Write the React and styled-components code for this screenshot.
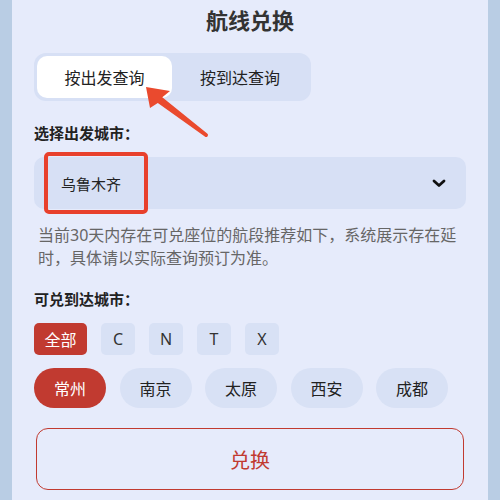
import React, { useState } from 'react';
import styled, { createGlobalStyle } from 'styled-components';

const GlobalStyle = createGlobalStyle`
  html, body {
    margin: 0;
    padding: 0;
    background: #b9cde4;
    font-family: "Noto Sans", "Noto Sans CJK SC", sans-serif;
  }
`;

const Panel = styled.div`
  position: relative;
  box-sizing: border-box;
  width: 476px;
  height: 500px;
  margin: 0 12px;
  padding: 0 22px;
  background: #e6ebfb;
  overflow: hidden;
`;

const Title = styled.h1`
  margin: 0;
  height: 40px;
  line-height: 40px;
  text-align: center;
  font-size: 22px;
  font-weight: 700;
  color: #333;
`;

const Tabs = styled.div`
  display: flex;
  box-sizing: border-box;
  width: 277px;
  height: 48px;
  margin-top: 13px;
  padding: 3px;
  background: #d7e0f5;
  border-radius: 12px;
`;

const Tab = styled.div`
  flex: ${(p) => (p.$active ? '0 0 135px' : '1')};
  display: flex;
  align-items: center;
  justify-content: center;
  border-radius: 10px;
  background: ${(p) => (p.$active ? '#fff' : 'transparent')};
  font-size: 16px;
  color: #222;
`;

const Label = styled.div`
  margin-top: ${(p) => p.$mt || 0}px;
  line-height: 22px;
  font-size: 15px;
  font-weight: 700;
  color: #222;
`;

const Select = styled.div`
  position: relative;
  display: flex;
  align-items: center;
  justify-content: space-between;
  height: 52px;
  margin-top: 13px;
  padding: 0 20px 0 27px;
  background: #d7e0f5;
  border-radius: 10px;
  font-size: 15px;
  color: #222;
`;

const Highlight = styled.div`
  position: absolute;
  left: 10px;
  top: -5px;
  box-sizing: border-box;
  width: 104px;
  height: 62px;
  border: 4px solid #e8402c;
  border-radius: 5px;
`;

const Note = styled.p`
  margin: 15px 0 0;
  padding: 0 4px;
  line-height: 22.5px;
  font-size: 16px;
  color: #666;
`;

const Row = styled.div`
  display: flex;
  gap: ${(p) => p.$gap}px;
  margin-top: ${(p) => p.$mt}px;
`;

const Letter = styled.div`
  display: flex;
  align-items: center;
  justify-content: center;
  width: ${(p) => (p.$wide ? 53 : 34)}px;
  height: 32px;
  border-radius: 5px;
  background: ${(p) => (p.$active ? '#c13a30' : '#d8e1f5')};
  color: ${(p) => (p.$active ? '#fff' : '#333')};
  font-size: 16px;
`;

const City = styled.div`
  display: flex;
  align-items: center;
  justify-content: center;
  width: 72px;
  height: 40px;
  border-radius: 20px;
  background: ${(p) => (p.$active ? '#c13a30' : '#d8e1f5')};
  color: ${(p) => (p.$active ? '#fff' : '#222')};
  font-size: 16px;
`;

const Button = styled.button`
  display: block;
  box-sizing: border-box;
  width: 428px;
  height: 62px;
  margin: 20px 2px 0;
  border: 1.5px solid #c13a30;
  border-radius: 12px;
  background: transparent;
  color: #c13a30;
  font-family: inherit;
  font-size: 20px;
  cursor: pointer;
`;

const Arrow = styled.svg`
  position: absolute;
  left: 118px;
  top: 80px;
  pointer-events: none;
`;

const Chevron = () => (
  <svg width="14" height="9" viewBox="0 0 14 9">
    <path d="M2 2 L7 6.5 L12 2" fill="none" stroke="#111" strokeWidth="2.8" strokeLinecap="round" strokeLinejoin="round" />
  </svg>
);

const letters = ['全部', 'C', 'N', 'T', 'X'];
const cities = ['常州', '南京', '太原', '西安', '成都'];

export default function App() {
  const [mode, setMode] = useState(0);
  const [letter, setLetter] = useState(0);
  const [city, setCity] = useState(0);

  return (
    <>
      <GlobalStyle />
      <Panel>
        <Title>航线兑换</Title>
        <Tabs>
          <Tab $active={mode === 0} onClick={() => setMode(0)}>按出发查询</Tab>
          <Tab $active={mode === 1} onClick={() => setMode(1)}>按到达查询</Tab>
        </Tabs>
        <Label $mt={21}>选择出发城市：</Label>
        <Select>
          <span>乌鲁木齐</span>
          <Chevron />
          <Highlight />
        </Select>
        <Note>当前30天内存在可兑座位的航段推荐如下，系统展示存在延时，具体请以实际查询预订为准。</Note>
        <Label $mt={19}>可兑到达城市：</Label>
        <Row $gap={14} $mt={13}>
          {letters.map((l, i) => (
            <Letter key={l} $wide={i === 0} $active={letter === i} onClick={() => setLetter(i)}>
              {l}
            </Letter>
          ))}
        </Row>
        <Row $gap={13.5} $mt={13}>
          {cities.map((c, i) => (
            <City key={c} $active={city === i} onClick={() => setCity(i)}>
              {c}
            </City>
          ))}
        </Row>
        <Button>兑换</Button>
        <Arrow width="80" height="62" viewBox="0 0 80 62">
          <path
            d="M16 7 L40 11 L32.3 17.2 L77.2 53.4 A2 2 0 0 1 74.8 56.6 L27.8 22.9 L20 28 Z"
            fill="#ea4a2e"
          />
        </Arrow>
      </Panel>
    </>
  );
}
